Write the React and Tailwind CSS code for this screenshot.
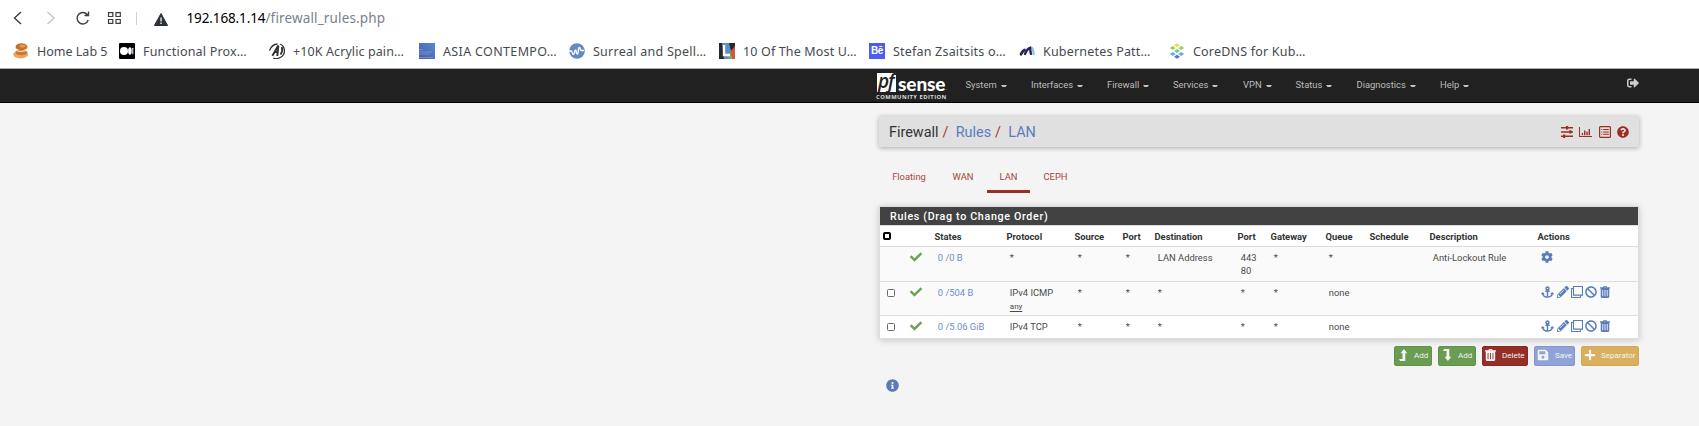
import React from 'react';
import {
  FaCheck, FaAnchor, FaPencilAlt, FaCog, FaSave, FaPlus,
  FaInfoCircle, FaQuestionCircle, FaSignOutAlt, FaBan,
} from 'react-icons/fa';

/* ---------- icons ---------- */
const Sliders = () => (
  <svg className="w-3 h-3 shrink-0" viewBox="0 0 12 12" fill="currentColor">
    <path d="M0 1h12v1.6H0zM0 5.2h12v1.6H0zM0 9.4h12V11H0z" />
    <path d="M5 0h2.2v3.4H5zM8.3 4.2h2.2v3.4H8.3zM2 8.5h2.2v3.4H2z" />
  </svg>
);
const BarChart = () => (
  <svg className="w-[13px] h-3 shrink-0" viewBox="0 0 13 12" fill="currentColor">
    <path d="M0 1h1v9h12v1H0zM2.8 7h1.3v2.2H2.8zM5 4.6h1.4v4.6H5zM7.3 5.8h1.4v3.4H7.3zM9.6 3h1.4v6.2H9.6z" />
  </svg>
);
const ListAlt = () => (
  <svg className="w-3 h-3 shrink-0" viewBox="0 0 12 12" fill="currentColor">
    <rect x=".6" y=".6" width="10.8" height="10.8" rx="1" fill="none" stroke="currentColor" strokeWidth="1.2" />
    <path d="M2.3 3h1v1h-1zM4.2 3h5.6v1H4.2zM2.3 5.4h1v1h-1zM4.2 5.4h5.6v1H4.2zM2.3 7.8h1v1h-1zM4.2 7.8h5.6v1H4.2z" />
  </svg>
);
const Clone = () => (
  <svg className="w-3 h-3 shrink-0" viewBox="0 0 12 12" fill="none" stroke="currentColor">
    <path d="M2.500 .5h9v8.600h-9z" strokeWidth="1.1" />
    <path d="M2.500 2.500h-2v9h9v-2" strokeWidth="1.1" />
  </svg>
);
const Trash = ({ big }) => (
  <svg className={big ? 'w-[11px] h-3 shrink-0' : 'w-[10px] h-3 shrink-0'} viewBox="0 0 11 12" preserveAspectRatio="none" fill="currentColor">
    <path fillRule="evenodd" d="M0 1.3h3.3L4 0h3l.7 1.3H11v1.2h-.8v8.3c0 .7-.5 1.2-1.1 1.2H1.9c-.6 0-1.1-.5-1.1-1.2V2.5H0zM4.4 1.3h2.2L6.3.8H4.7zM2.6 4v6.3h.9V4zM5.05 4v6.3h.9V4zM7.5 4v6.3h.9V4z" />
  </svg>
);
const Level = ({ down }) => (
  <svg className={down ? 'w-[8px] h-3 shrink-0 -scale-y-100' : 'w-[8px] h-3 shrink-0'} viewBox="0 0 8 12" fill="currentColor">
    <path d="M4.900 0 8.200 4.200H6.300V12H1.100L0 10h3.500V4.200H1.600z" />
  </svg>
);

/* ---------- browser chrome ---------- */
const BunIcon = () => (
  <svg className="size-4" viewBox="0 0 16 16">
    <ellipse cx="8.5" cy="3.8" rx="6" ry="3.6" fill="#c8702c" />
    <ellipse cx="9.5" cy="3" rx="3" ry="1.5" fill="#e29a58" />
    <ellipse cx="7.6" cy="11.5" rx="7.4" ry="3.9" fill="#e9a564" />
    <ellipse cx="8.4" cy="9.6" rx="6" ry="2.6" fill="#cd7932" />
    <path d="M3 7.2c3 1.6 7 1.4 10 .2" stroke="#f4d3a8" strokeWidth="1.2" fill="none" />
  </svg>
);
const MediumIcon = () => (
  <svg className="size-4" viewBox="0 0 16 16">
    <rect width="16" height="16" rx="1" fill="#000" />
    <circle cx="5" cy="8" r="4" fill="#fff" />
    <ellipse cx="10.9" cy="8" rx="1.8" ry="3.8" fill="#fff" />
    <rect x="13.3" y="4.7" width="1" height="6.6" rx=".5" fill="#fff" />
  </svg>
);
const BrushIcon = () => (
  <svg className="size-4" viewBox="0 0 16 16" fill="none" stroke="#333">
    <path d="M.5 7.600C2 3.600 4.800 1.200 8.500 1M4.200 15c2.400.9 5 .7 7-.5 2.700-1.400 4.200-4 4.200-6.600 0-3-1.500-5.600-4.200-6.900" strokeWidth="1.300" />
    <path d="M3.400 12.800 9.300 2.600 8.300 13M5.200 9h4" strokeWidth="2" />
    <path d="M12.800 4c.8 2.500.4 5-1.200 7.500" strokeWidth="1.800" />
  </svg>
);
const BlueIcon = () => (
  <svg className="size-4" viewBox="0 0 16 16">
    <defs><linearGradient id="bl" x1="0" x2="1" y1="1" y2="0"><stop offset="0" stopColor="#4958a8" /><stop offset="1" stopColor="#528dd2" /></linearGradient></defs>
    <rect width="16" height="16" fill="url(#bl)" />
    <path d="M0 6.5h4M0 9h13M0 11h11M0 14.5h14" stroke="#8091cd" strokeWidth=".9" />
  </svg>
);
const WaveIcon = () => (
  <svg className="size-4" viewBox="0 0 16 16" fill="none" stroke="#fff">
    <circle cx="8" cy="8" r="7.8" fill="#6289c8" stroke="none" />
    <path d="M0 8h2.400c.8 0 .6 3.500 2 3.500 1.400 0 .8-4.500 2-4.500s.5 4 1.900 4c1.500 0 .6-6.500 2-6.500 1.200 0 .5 3 1.900 3H15" strokeWidth="1.400" />
  </svg>
);
const LIcon = () => (
  <svg className="size-4" viewBox="0 0 16 16">
    <rect width="16" height="16" fill="#23292e" />
    <path d="M3 0h7l4 16H5z" fill="#5c8fc4" />
    <path d="M16 3v13h-2.5L11 9z" fill="#d0583c" />
    <path d="m11 9 2.5 7H9z" fill="#7fae62" />
    <path d="M5 2v10h6" stroke="#fff" strokeWidth="2.4" fill="none" />
  </svg>
);
const BeIcon = () => (
  <span className="size-4 bg-[#4c5cf5] text-white font-bold text-[10px] leading-4 text-center font-['Liberation_Sans',sans-serif] tracking-[-0.3px]">Bē</span>
);
const MIcon = () => (
  <svg className="size-4" viewBox="0 0 16 16" fill="none" strokeLinecap="round">
    <path d="M11.6 4.6c2.2-.4 2.6 2.5 3.2 6.6" stroke="#8bc0ee" strokeWidth="2.2" />
    <path d="M2 11.2c.8-1.6 1.8-3.4 3.4-4.2" stroke="#2a2352" strokeWidth="2.8" />
    <path d="M6 11c1-2.6 2.6-5.4 5-6.2.4 2 .3 4 1 6" stroke="#2a2352" strokeWidth="2.4" />
  </svg>
);
const DnsIcon = () => (
  <svg className="size-4" viewBox="0 0 16 16">
    <g fill="#e3e04a"><path d="m8 .2 3 2-3 2-3-2z" /></g>
    <g fill="#a2cf52"><path d="m3.8 3 3 2-3 2-3-2zM12.2 3l3 2-3 2-3-2z" /></g>
    <g fill="#7cc6b4"><path d="m8 6 3 2-3 2-3-2z" /></g>
    <g fill="#6fa9e8"><path d="m3.8 9 3 2-3 2-3-2zM12.2 9l3 2-3 2-3-2z" /></g>
    <g fill="#5472cc"><path d="m8 11.8 3 2-3 2-3-2z" /></g>
  </svg>
);

const bookmarks = [
  [BunIcon, 'Home Lab 5', 'w-[106px] tracking-[0px]'],
  [MediumIcon, 'Functional Prox…', 'w-[150px] tracking-[0.200px]'],
  [BrushIcon, '+10K Acrylic pain…', 'w-[150px] tracking-[0.100px]'],
  [BlueIcon, 'ASIA CONTEMPO…', 'w-[150px] tracking-[0.350px]'],
  [WaveIcon, 'Surreal and Spell…', 'w-[150px] tracking-[0.250px]'],
  [LIcon, '10 Of The Most U…', 'w-[150px] tracking-[0.150px]'],
  [BeIcon, 'Stefan Zsaitsits o…', 'w-[150px] tracking-[0.200px]'],
  [MIcon, 'Kubernetes Patt…', 'w-[150px] tracking-[0.200px]'],
  [DnsIcon, 'CoreDNS for Kub…', 'w-[150px] tracking-[0.200px]'],
];

const Browser = () => (
  <div className="h-[69px] bg-white border-b border-[#a9aebb] font-['Noto_Sans','Open_Sans',sans-serif]">
    <div className="h-9 flex items-center pl-[13px]">
      <svg className="w-[124px] h-5 shrink-0" viewBox="0 0 124 20" fill="none" stroke="#3b3f45" strokeWidth="1.4">
        <path d="m8 4-6.5 6L8 16" />
        <path d="m34.500 4 6.500 6-6.500 6" stroke="#c4c6c9" />
        <path d="M74.500 7A5.700 5.700 0 1 0 75.200 12M75.500 3.500v4h-4" />
        <path d="M95.500 4.700h4.300v3.800h-4.300zM103 4.700h4.300v3.800H103zM95.500 11.500h4.300v3.800h-4.300zM103 11.500h4.300v3.800H103z" strokeWidth="1.2" />
        <path d="M123.500 4v13" stroke="#cfd1d4" strokeWidth="1" />
      </svg>
      <svg className="w-[14px] h-[13px] ml-[17px] mt-[3px] shrink-0" viewBox="0 0 14 13">
        <path d="M7 .5 13.600 12.500H.4z" fill="#2b323b" stroke="#2b323b" strokeLinejoin="round" />
        <path d="M6.400 4.500h1.300v4H6.400zM6.400 9.600h1.300v1.300H6.400z" fill="#fff" />
      </svg>
      <p className="ml-[18.500px] text-[13.500px] leading-5 whitespace-nowrap text-[#78818c] tracking-[0.150px]"><span className="text-black tracking-[-0.120px]">192.168.1.14</span>/firewall_rules.php</p>
    </div>
    <div className="h-[30px] flex items-center pl-[13px]">
      {bookmarks.map(([Icon, label, w]) => (
        <div key={label} className={`${w} flex items-center gap-2 shrink-0`}>
          <Icon />
          <span className="mt-[2px] text-[12.500px] leading-5 text-[#454a50] whitespace-nowrap">{label}</span>
        </div>
      ))}
    </div>
  </div>
);

/* ---------- navbar ---------- */
const Caret = () => (
  <svg className="ml-1 mt-[3px] w-[6px] h-[3px] shrink-0" viewBox="0 0 6 3" fill="#c4c4c4"><path d="M0 0h6L4.500 2h-3z" /></svg>
);
const menus = [
  ['System', 'w-[65.500px]'], ['Interfaces', 'w-[76px]'], ['Firewall', 'w-[66px]'], ['Services', 'w-[70px]'],
  ['VPN', 'w-[52.500px]'], ['Status', 'w-[61px]'], ['Diagnostics', 'w-[83.500px]'], ['Help', 'w-[40px]'],
];
const Logo = () => (
  <div className="w-[71px] h-[34px] pt-[4px] flex flex-col shrink-0">
    <div className="flex h-[19px] ml-[1px] items-end">
      <span className="w-[19px] h-[19px] bg-white text-[#212121] italic font-semibold text-[19px] leading-[17px] tracking-[-1.200px] pl-[1px] font-['Open_Sans',sans-serif] whitespace-nowrap">pf</span>
      <span className="ml-[2px] mb-[-1px] text-white font-black text-[19px] leading-[19px] tracking-[-0.100px] font-['Lato',sans-serif]">sense</span>
      <span className="text-white text-[5px] leading-[8px]">.</span>
    </div>
    <span className="mt-[2px] text-[#dddddd] font-bold text-[5.800px] leading-[6px] tracking-[0.470px] whitespace-nowrap font-['Open_Sans',sans-serif]">COMMUNITY EDITION</span>
  </div>
);
const Navbar = () => (
  <nav className="h-[34px] bg-[#212121] border-b border-black flex pl-[876px]">
    <Logo />
    <div className="flex items-center ml-[18.500px] pb-[2px]">
      {menus.map(([m, w]) => (
        <span key={m} className={`${w} flex items-center text-[9.380px] text-[#bdbdbd] leading-4 shrink-0`}>{m}<Caret /></span>
      ))}
    </div>
    <FaSignOutAlt className="ml-auto mr-[60px] mt-[8px] size-3 text-[#cccccc]" />
  </nav>
);

/* ---------- table ---------- */
const cols = 'grid grid-cols-[54px_72px_68px_48px_32px_83px_33px_55px_44px_60px_108px_102px]';
const heads = ['States', 'Protocol', 'Source', 'Port', 'Destination', 'Port', 'Gateway', 'Queue', 'Schedule', 'Description', 'Actions'];
const Box = () => <span className="size-2 rounded-[1.500px] border border-[#6b6b6b] bg-white" />;
const Actions = () => (
  <div className="flex items-center text-[#5a7cbb]">
    <FaAnchor className="w-[13px] h-3 mr-[2.500px]" />
    <FaPencilAlt className="w-3 h-3 mr-[2px]" />
    <Clone />
    <FaBan className="w-3 h-3 ml-[2.500px] mr-[2.500px]" />
    <Trash />
  </div>
);
const rows = [
  { h: 'h-[35px] bg-[#fafafa]', lock: true, cells: ['0 /0 B', '*', '*', '*', 'LAN Address', '443\n80', '*', '*', '', 'Anti-Lockout Rule'] },
  { h: 'h-[34px] bg-[#fafafa]', cells: ['0 /504 B', 'ICMP', '*', '*', '*', '*', '*', 'none', '', ''] },
  { h: 'h-[22px] bg-white', cells: ['0 /5.06 GiB', 'IPv4 TCP', '*', '*', '*', '*', '*', 'none', '', ''] },
];

const Rules = () => (
  <section className="mt-[13px] w-[760px] border border-[#dddddd] bg-white shadow-[0_1px_7px_rgba(0,0,0,0.2)]">
    <h2 className="h-[18px] bg-[#424242] text-white font-medium text-[10.700px] leading-[19px] tracking-[0.670px] pl-[10px]">Rules (Drag to Change Order)</h2>
    <div className={`${cols} h-[22px] items-center border-b border-[#dddddd] border-t text-[9.380px] font-bold text-[#333333] leading-[13px] whitespace-nowrap`}>
      <span className="ml-[3px] size-2 rounded-[2px] border-2 border-black bg-white" />
      {heads.map((h, i) => <span key={i} className="pl-[0.500px]">{h}</span>)}
    </div>
    {rows.map((r, i) => (
      <div key={i} className={`${cols} ${r.h} ${i < 2 ? 'border-b border-[#dddddd]' : ''} pt-[4px] text-[9.380px] leading-[13px] text-[#4a4a4a]`}>
        <div className="flex pl-[7px]">
          <span className="w-[23px] pt-[3px] flex">{!r.lock && <Box />}</span>
          <FaCheck className="size-3 text-[#6aa257]" />
        </div>
        {r.cells.map((c, j) => (
          <div key={j} className={`pl-[3.800px] whitespace-pre ${j === 0 ? 'text-[#6f8cc4]' : ''}`}>
            {c === 'ICMP' ? <>IPv4 ICMP<br /><span className="text-[8px] underline underline-offset-2">any</span></> : c}
          </div>
        ))}
        <div className="pl-[4px]">{r.lock ? <FaCog className="size-3 text-[#5a7cbb]" /> : <Actions />}</div>
      </div>
    ))}
  </section>
);

const btn = 'h-5 rounded-[2px] border flex items-center text-[8px] leading-3';
const Buttons = () => (
  <div className="w-[760px] mt-[7px] flex justify-end gap-[6px] text-[#f4f4f4]">
    <button className={`${btn} w-[38px] bg-[#6a9c52] border-[#5f9447] pl-[4px] gap-[7px]`}><span className="pb-[2px]"><Level /></span>Add</button>
    <button className={`${btn} w-[38px] bg-[#6a9c52] border-[#5f9447] pl-[4px] gap-[7px]`}><span className="pb-[2px]"><Level down /></span>Add</button>
    <button className={`${btn} w-[46px] bg-[#932f27] border-[#882a22] pl-[2px] gap-[6px]`}><span className="pb-[2px]"><Trash big /></span>Delete</button>
    <button className={`${btn} w-[41px] bg-[#8fa3d8] border-[#8299cf] pl-[2px] gap-[6px]`}><span className="pb-[2px]"><FaSave className="size-3 shrink-0" /></span>Save</button>
    <button className={`${btn} w-[58px] bg-[#d8ae5f] border-[#d3a650] pl-[2px] gap-[5px]`}><span className="pb-[2px]"><FaPlus className="size-3 shrink-0" /></span>Separator</button>
  </div>
);

const tabs = [['Floating', 'w-[60px]'], ['WAN', 'w-[48px]'], ['LAN', 'w-[43px]'], ['CEPH', 'w-[51px]']];

export default function App() {
  return (
    <div className="w-[1699px] h-[426px] overflow-hidden bg-[#f4f4f4] font-['Roboto',sans-serif]">
      <Browser />
      <Navbar />
      <main className="pl-[879px] pt-[13px]">
        <header className="w-[760px] h-[31px] bg-[#e0e0e0] shadow-[0_1px_5px_rgba(0,0,0,0.3)] rounded-[1px] flex items-center pl-[10px] pr-[10px]">
          <h1 className="flex text-[14.400px] leading-5 text-[#333333] pt-[2px]">
            Firewall<span className="ml-1 text-[#a5382c]">/</span>
            <span className="ml-[7.300px] text-[#5a7cbb]">Rules</span><span className="ml-1 text-[#a5382c]">/</span>
            <span className="ml-[7.300px] text-[#5a7cbb]">LAN</span>
          </h1>
          <div className="ml-auto flex items-center gap-[6.500px] text-[#9b2d23] pt-px">
            <Sliders /><BarChart /><ListAlt /><FaQuestionCircle className="size-3" />
          </div>
        </header>
        <div className="mt-[13px] flex h-[33px] text-[9.380px] text-[#a5453c]">
          {tabs.map(([t, w]) => (
            <span key={t} className={`${w} text-center pt-[10px] leading-[14px] border-b-[3px] ${t === 'LAN' ? 'border-[#9b2d23]' : 'border-transparent'}`}>{t}</span>
          ))}
        </div>
        <Rules />
        <Buttons />
        <FaInfoCircle className="mt-[13px] ml-[7px] size-[13px] text-[#5a7cbb]" />
      </main>
    </div>
  );
}
